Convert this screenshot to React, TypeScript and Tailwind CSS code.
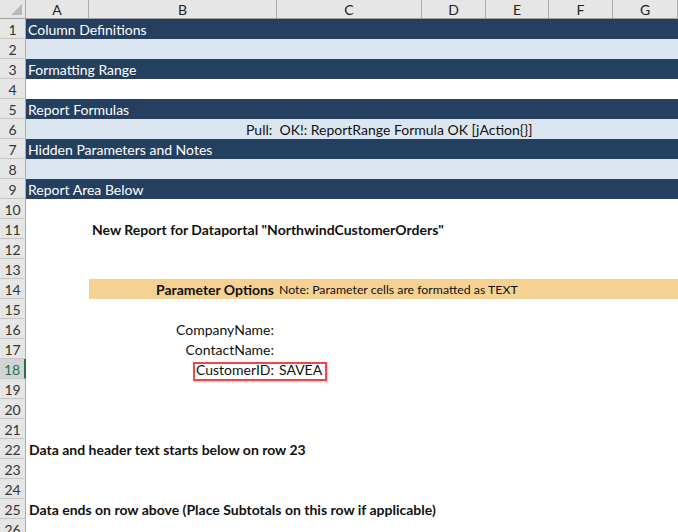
const cols: [string, number][] = [
  ["A", 63],
  ["B", 188],
  ["C", 145],
  ["D", 64],
  ["E", 63],
  ["F", 64],
  ["G", 65],
];

const font = { fontFamily: "Lato, 'Liberation Sans', sans-serif" };

function RowHead({ n, active }: { n: number; active?: boolean }) {
  return (
    <div
      className={
        active
          ? "w-[26px] shrink-0 flex items-center justify-center pt-[2px] bg-[#d3d3d3] text-[#217346] border-b border-[#c6c6c6] border-r-2 border-r-[#217346]"
          : "w-[26px] shrink-0 flex items-center justify-center pt-[2px] bg-[#e6e6e6] text-[#333] border-b border-[#c6c6c6] border-r border-r-[#ababab]"
      }
    >
      {n}
    </div>
  );
}

function Band({ n, dark, text }: { n: number; dark?: boolean; text?: string }) {
  return (
    <div className="flex h-5">
      <RowHead n={n} />
      <div
        className={
          dark
            ? "flex-1 flex items-center pl-[2px] pt-[2px] bg-[#243f60] text-white"
            : "flex-1 flex items-center pl-[2px] pt-[2px] bg-[#dce6f1] text-[#111]"
        }
      >
        {text}
      </div>
    </div>
  );
}

function Plain({ n, children, active }: { n: number; children?: React.ReactNode; active?: boolean }) {
  return (
    <div className="flex h-5 relative">
      <RowHead n={n} active={active} />
      <div className="flex-1 flex items-center pt-[2px] bg-white text-[#111]">{children}</div>
    </div>
  );
}

function Param({ n, label, value, active }: { n: number; label: string; value?: string; active?: boolean }) {
  return (
    <Plain n={n} active={active}>
      <div className="w-[63px] shrink-0" />
      <div className="w-[188px] shrink-0 text-right pr-[3px]">{label}</div>
      <div className="pl-[2px]">{value}</div>
    </Plain>
  );
}

export default function App() {
  return (
    <div className="w-[678px] h-[532px] overflow-hidden bg-white text-[14px] leading-none" style={font}>
      {/* column headers */}
      <div className="flex h-[19px] bg-[#e6e6e6] border-b border-[#9e9e9e] text-[#222]">
        <div className="w-[26px] shrink-0 relative border-r border-[#ababab]">
          <div className="absolute right-[3px] bottom-[3px] w-0 h-0 border-l-[11px] border-l-transparent border-b-[11px] border-b-[#b9b9b9]" />
        </div>
        {cols.map(([c, w]) => (
          <div
            key={c}
            className="shrink-0 flex items-center justify-center pt-[1px] border-r border-[#ababab]"
            style={{ width: w }}
          >
            {c}
          </div>
        ))}
      </div>

      <Band n={1} dark text="Column Definitions" />
      <Band n={2} />
      <Band n={3} dark text="Formatting Range" />
      <Plain n={4} />
      <Band n={5} dark text="Report Formulas" />
      <div className="flex h-5">
        <RowHead n={6} />
        <div className="flex-1 flex items-center pl-[220px] pt-[2px] bg-[#dce6f1] text-[#111]">
          Pull:&nbsp; OK!: ReportRange Formula OK [jAction{"{}"}]
        </div>
      </div>
      <Band n={7} dark text="Hidden Parameters and Notes" />
      <Band n={8} />
      <Band n={9} dark text="Report Area Below" />
      <Plain n={10} />
      <Plain n={11}>
        <div className="w-[63px] shrink-0" />
        <div className="pl-[3px] font-bold">New Report for Dataportal "NorthwindCustomerOrders"</div>
      </Plain>
      <Plain n={12} />
      <Plain n={13} />
      <Plain n={14}>
        <div className="w-[63px] shrink-0" />
        <div className="flex-1 self-stretch -mt-[2px] pt-[2px] flex items-center bg-[#f5d292]">
          <div className="w-[188px] shrink-0 text-right pr-[3px] font-bold">Parameter Options</div>
          <div className="pl-[2px] text-[12.3px]">Note: Parameter cells are formatted as TEXT</div>
        </div>
      </Plain>
      <Plain n={15} />
      <Param n={16} label="CompanyName:" />
      <Param n={17} label="ContactName:" />
      <div className="relative">
        <Param n={18} label="CustomerID:" value="SAVEA" active />
        <div className="absolute z-10 left-[193px] top-[3px] w-[134px] h-[19px] border-2 border-[#ee4747] shadow-[1px_1px_2px_rgba(0,0,0,0.25)]" />
      </div>
      <Plain n={19} />
      <Plain n={20} />
      <Plain n={21} />
      <Plain n={22}>
        <div className="pl-[3px] font-bold">Data and header text starts below on row 23</div>
      </Plain>
      <Plain n={23} />
      <Plain n={24} />
      <Plain n={25}>
        <div className="pl-[3px] font-bold">Data ends on row above (Place Subtotals on this row if applicable)</div>
      </Plain>
      <Plain n={26} />
    </div>
  );
}
